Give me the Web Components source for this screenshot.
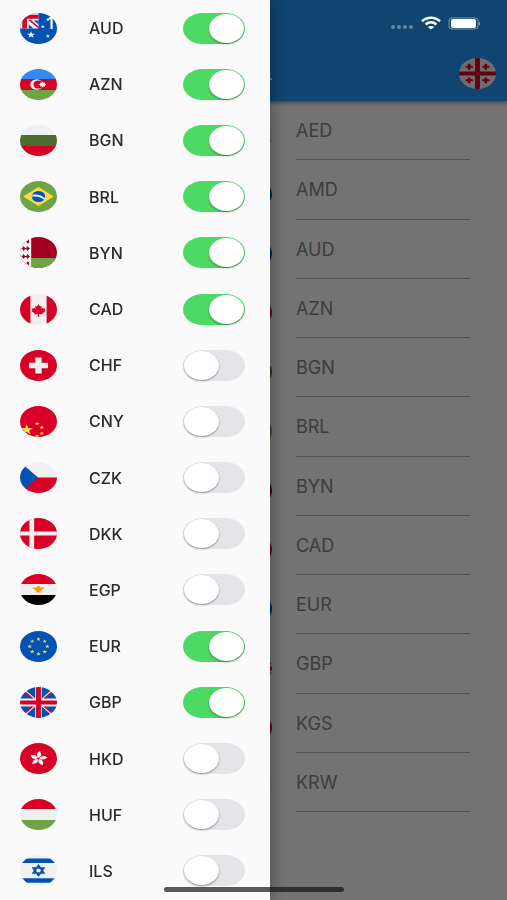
<!DOCTYPE html>
<html lang="en">
<head>
<meta charset="utf-8">
<meta name="viewport" content="width=device-width, initial-scale=1">
<title>Currencies</title>
<style>
  body {
    margin: 0;
    font-family: Inter, "Liberation Sans", sans-serif;
  }
</style>
</head>
<body>
<currency-app></currency-app>

<script>
// Points of a five-pointed star
function star(cx, cy, r, fill) {
  const points = [];
  for (let i = 0; i < 10; i++) {
    const radius = i % 2 ? r * 0.4 : r;
    const a = Math.PI * (i / 5 - 0.5);
    points.push(Math.round(cx + radius * Math.cos(a)) + ',' + Math.round(cy + radius * Math.sin(a)));
  }
  return `<polygon fill="${fill}" points="${points.join(' ')}"/>`;
}

function stripes(top, middle, bottom) {
  return `<path fill="${top}" d="M0 0h512v167H0z"/>
    <path fill="${middle}" d="M0 167h512v178H0z"/>
    <path fill="${bottom}" d="M0 345h512v167H0z"/>`;
}

function ring(count, r, draw) {
  let out = '';
  for (let i = 0; i < count; i++) {
    const a = (Math.PI * 2 * i) / count;
    out += draw(256 + r * Math.sin(a), 256 - r * Math.cos(a));
  }
  return out;
}

const RED = '#d80027';
const BLUE = '#0052b4';
const GREEN = '#6da544';
const WHITE = '#f0f0f0';
const YELLOW = '#ffda44';

const base = (fill) => `<path fill="${fill}" d="M0 0h512v512H0z"/>`;

// Every flag is drawn on a 512 x 512 board and clipped by its host
const FLAGS = {
  AED: stripes(GREEN, WHITE, '#000') + `<path fill="#a2001d" d="M0 0h167v512H0z"/>`,
  AMD: stripes(RED, BLUE, '#ff9811'),
  AUD: base(BLUE) + `
    <path fill="${WHITE}" d="M0 0h256v256H0z"/>
    <path fill="${BLUE}" d="M122 190v66h66zM190 122h66v66z"/>
    <path fill="${RED}" d="M0 30h256v66H0zM32 0h64v256H32z"/>
    <path fill="${RED}" d="M112 112h34l110 110v34z"/>`
    + star(153, 360, 60, WHITE) + star(386, 382, 34, WHITE) + star(316, 225, 32, WHITE)
    + star(386, 110, 28, WHITE),
  AZN: stripes('#338af3', RED, GREEN) + `
    <circle cx="230" cy="256" r="88" fill="${WHITE}"/>
    <circle cx="254" cy="256" r="68" fill="${RED}"/>
    <path fill="${WHITE}" d="M312 206l14 20 22-5-5 22 24 13-24 13 5 22-22-5-14 20-14-20-22 5 5-22-24-13 24-13-5-22 22 5z"/>`,
  BGN: stripes(WHITE, '#496e2d', RED),
  BRL: base(GREEN) + `
    <path fill="${YELLOW}" d="M256 100l211 156-211 156L45 256z"/>
    <circle cx="256" cy="256" r="92" fill="${BLUE}"/>
    <path fill="${WHITE}" d="M174 226c62-14 130 6 172 62l-9 25c-44-44-106-68-173-52z"/>`,
  BYN: base('#a2001d') + `
    <path fill="${GREEN}" d="M155 345h357v167H155z"/>
    <path fill="#fafafa" d="M0 0h155v512H0z"/>
    <g fill="#a2001d">
      <path d="M50 148l26 42-26 42-26-42zM106 148l26 42-26 42-26-42z"/>
      <path d="M50 280l26 42-26 42-26-42zM106 280l26 42-26 42-26-42z"/>
      <path d="M24 180h108v20H24zM24 312h108v20H24z"/>
      <path d="M126 40v60l-20 8-20-30zM126 472v-60l-20-8-20 30z"/>
    </g>`,
  CAD: base(WHITE) + `
    <path fill="${RED}" d="M0 0h144v512H0zM368 0h144v512H368z"/>
    <path fill="${RED}" d="M256 170l22 38 24-10-8 46 24-20 8 18 26-4-12 30 18 12-50 36 6 20-48-6v46h-20v-46l-48 6 6-20-50-36 18-12-12-30 26 4 8-18 24 20-8-46 24 10z"/>`,
  CHF: base(RED) + `<path fill="${WHITE}" d="M212 124h88v88h88v88h-88v88h-88v-88h-88v-88h88z"/>`,
  CNY: base(RED) + star(93, 394, 92, YELLOW) + star(237, 293, 36, YELLOW)
    + star(302, 354, 36, YELLOW) + star(302, 452, 36, YELLOW) + star(237, 500, 36, YELLOW),
  CZK: base(WHITE) + `
    <path fill="${RED}" d="M200 256h312v256H0z"/>
    <path fill="${BLUE}" d="M0 0l60 60 190 196L60 452 0 512z"/>`,
  DKK: base(RED) + `<path fill="${WHITE}" d="M130 0h66v223h316v66H196v223h-66V289H0v-66h130z"/>`,
  EGP: stripes(RED, WHITE, '#000') + `
    <path fill="#ff9811" d="M176 224h56c0-18 10-24 24-24s24 6 24 24h56c0 18-14 32-32 32h2c-4 16-14 28-30 28l18 22h-76l18-22c-16 0-26-12-30-28h2c-18 0-32-14-32-32z"/>`,
  EUR: base(BLUE) + ring(8, 122, (x, y) => star(x, y, 34, YELLOW)),
  GBP: base(WHITE) + `
    <path fill="${BLUE}" d="M60 90l110 100H0zM90 60h120v130zM302 60h120L302 190zM452 90v100H342zM452 90l60 100H342zM0 322h170L60 422zM90 452l120-130v190zM302 322v190l120-60zM342 322h170l-60 100zM140 0h70v180L96 62zM302 0h70l44 62-114 118z"/>
    <path fill="${RED}" d="M222 0h68v222h222v68H290v222h-68V290H0v-68h222z"/>
    <path fill="${RED}" d="M322 322h34l90 92-16 18zM190 322h-34l-90 92 16 18zM190 190h-34L66 98l16-18zM322 190h34l90-92-16-18z"/>`,
  GEL: base(WHITE) + `
    <path fill="${RED}" d="M222 0h68v222h222v68H290v222h-68V290H0v-68h222z"/>
    <path fill="${RED}" d="M124 94h34v32h34v34h-34v32h-34v-32H92v-34h32zM354 94h34v32h34v34h-34v32h-34v-32h-32v-34h32zM124 320h34v32h34v34h-34v32h-34v-32H92v-34h32zM354 320h34v32h34v34h-34v32h-34v-32h-32v-34h32z"/>`,
  HKD: base(RED) + [8, 80, 152, 224, 296].map((deg) => `
    <path fill="${WHITE}" transform="rotate(${deg} 256 256)" d="M254 246c-38-24-44-84 10-116-4 26 32 40 16 80-6 16-18 22-26 36z"/>`).join(''),
  HUF: stripes(RED, WHITE, GREEN),
  ILS: base(WHITE) + `
    <path fill="${BLUE}" d="M0 56h512v76H0zM0 384h512v76H0z"/>
    <path fill="none" stroke="${BLUE}" stroke-width="24" d="M256 172l74 126H182zM256 340l74-126H182z"/>`,
  KGS: base(RED) + `<circle cx="256" cy="256" r="110" fill="${YELLOW}"/>`,
  KRW: base(WHITE) + `
    <path fill="${RED}" d="M156 256a100 100 0 0 1 200 0z"/>
    <path fill="${BLUE}" d="M156 256a100 100 0 0 0 200 0z"/>`
};

class CurrencyFlag extends HTMLElement {
  constructor() {
    super();
    this.attachShadow({ mode: 'open' });
  }

  connectedCallback() {
    this.shadowRoot.innerHTML = `
      <style>
        :host {
          display: block;
          flex: none;
          width: 37px;
          height: 31px;
          border-radius: 50%;
          overflow: hidden;
        }

        svg {
          display: block;
          width: 100%;
          height: 100%;
        }
      </style>
      <svg viewBox="0 0 512 512" preserveAspectRatio="none" aria-hidden="true">${FLAGS[this.getAttribute('code')]}</svg>
    `;
  }
}
customElements.define('currency-flag', CurrencyFlag);

// One line of the drawer: flag, code and switch
class CurrencyToggle extends HTMLElement {
  constructor() {
    super();
    this.attachShadow({ mode: 'open' });
  }

  connectedCallback() {
    const code = this.getAttribute('code');
    this.shadowRoot.innerHTML = `
      <style>
        :host {
          display: flex;
          align-items: center;
          flex: 1 0 auto;
          gap: 32px;
          min-height: 48px;
          padding: 0 25px 0 20px;
        }

        label {
          flex: 1;
          font-size: 16px;
          line-height: 20px;
          font-weight: 500;
          color: #2b2b2b;
        }

        input {
          appearance: none;
          flex: none;
          display: flex;
          align-items: center;
          width: 62px;
          height: 31px;
          margin: 0;
          padding: 0 1px;
          box-sizing: border-box;
          border-radius: 20px / 16px;
          background: #e5e5e9;
          cursor: pointer;
        }

        input::before {
          content: "";
          width: 35px;
          height: 29px;
          border-radius: 50%;
          background: #fff;
          box-shadow: 0 1px 2px rgba(0, 0, 0, 0.4);
        }

        input:checked {
          justify-content: flex-end;
          background: #4cd964;
        }
      </style>
      <currency-flag code="${code}"></currency-flag>
      <label for="switch">${code}</label>
      <input type="checkbox" role="switch" id="switch">
    `;
    this.shadowRoot.querySelector('input').checked = this.hasAttribute('on');
  }
}
customElements.define('currency-toggle', CurrencyToggle);

// One line of the converter: flag and amount field
class AmountField extends HTMLElement {
  constructor() {
    super();
    this.attachShadow({ mode: 'open' });
  }

  connectedCallback() {
    const code = this.getAttribute('code');
    this.shadowRoot.innerHTML = `
      <style>
        :host {
          display: grid;
          grid-template-columns: 1fr 37px 174px;
          column-gap: 24px;
          padding-right: 37px;
          min-height: 48px;
        }

        currency-flag {
          grid-column: 2;
          align-self: end;
          margin-bottom: 10px;
        }

        .field {
          display: grid;
          border-bottom: 1px solid #b4b4b4;
        }

        label,
        input {
          grid-area: 1 / 1;
          font: inherit;
          font-size: 18px;
          line-height: 24px;
        }

        label {
          align-self: center;
          padding-top: 2px;
          color: #868686;
        }

        input {
          width: 100%;
          box-sizing: border-box;
          border: 0;
          padding: 0;
          background: none;
          outline: none;
        }
      </style>
      <currency-flag code="${code}"></currency-flag>
      <div class="field">
        <label for="amount">${code}</label>
        <input id="amount" type="text" inputmode="decimal">
      </div>
    `;
  }
}
customElements.define('amount-field', AmountField);

class AppHeader extends HTMLElement {
  constructor() {
    super();
    this.attachShadow({ mode: 'open' });
    this.shadowRoot.innerHTML = `
      <style>
        :host {
          display: grid;
          grid-template-columns: 1fr 37px 187px 37px;
          align-items: end;
          box-sizing: border-box;
          height: 101px;
          padding: 0 11px 12px 0;
          background: #2196f3;
          box-shadow: 0 2px 4px rgba(0, 0, 0, 0.4);
          z-index: 1;
        }

        svg {
          grid-column: 2;
          width: 100%;
          height: 20px;
        }

        currency-flag {
          grid-column: 4;
        }
      </style>
      <svg viewBox="0 0 37 20" aria-hidden="true"><path d="M23 10h14" stroke="#fff" stroke-width="2"/></svg>
      <currency-flag code="GEL"></currency-flag>
    `;
  }
}
customElements.define('app-header', AppHeader);

class SideDrawer extends HTMLElement {
  constructor() {
    super();
    this.attachShadow({ mode: 'open' });
    this.shadowRoot.innerHTML = `
      <style>
        :host {
          position: fixed;
          inset: 0;
          z-index: 2;
          display: flex;
          background: rgba(0, 0, 0, 0.54);
        }

        nav {
          display: flex;
          flex-direction: column;
          box-sizing: border-box;
          width: 270px;
          max-width: 80%;
          padding-bottom: 1px;
          overflow: hidden;
          background: #fafafa;
          box-shadow: 0 0 16px rgba(0, 0, 0, 0.4);
        }
      </style>
      <nav aria-label="Currencies"><slot></slot></nav>
    `;
  }
}
customElements.define('side-drawer', SideDrawer);

class StatusBar extends HTMLElement {
  constructor() {
    super();
    this.attachShadow({ mode: 'open' });
    this.shadowRoot.innerHTML = `
      <style>
        :host {
          position: fixed;
          inset: 0 0 auto 0;
          z-index: 3;
          display: flex;
          align-items: center;
          justify-content: space-between;
          height: 46px;
          padding: 0 26px 0 47px;
          color: #fff;
          pointer-events: none;
        }

        .clock {
          font-size: 16px;
          line-height: 20px;
          font-weight: 600;
        }

        .icons {
          display: flex;
          align-items: center;
          gap: 7px;
        }

        svg {
          display: block;
        }
      </style>
      <span class="clock">1</span>
      <div class="icons">
        <svg width="24" height="14" viewBox="0 0 24 14" fill="#fff" fill-opacity="0.35">
          <circle cx="3" cy="11" r="2"/><circle cx="9" cy="11" r="2"/><circle cx="15" cy="11" r="2"/><circle cx="21" cy="11" r="2"/>
        </svg>
        <svg width="20" height="14" viewBox="0 0 20 14" fill="none" stroke="#fff" stroke-width="2.6">
          <path d="M1 5.2C6 .6 14 .6 19 5.2"/>
          <path d="M4.6 8.4c3.2-2.8 7.6-2.8 10.8 0"/>
          <path d="M10 13.500L6.800 11c1.800-1.500 4.600-1.500 6.400 0z" fill="#fff" stroke="none"/>
        </svg>
        <svg width="33" height="13" viewBox="0 0 33 13">
          <rect x="1" y="1" width="29" height="11" rx="3" fill="none" stroke="#fff" stroke-opacity="0.45"/>
          <rect x="3" y="2" width="25" height="9" rx="2" fill="#fff"/>
          <path d="M31 4.500c1.600.4 1.600 3.600 0 4z" fill="#fff" fill-opacity="0.5"/>
        </svg>
      </div>
    `;
  }
}
customElements.define('status-bar', StatusBar);

class HomeIndicator extends HTMLElement {
  constructor() {
    super();
    this.attachShadow({ mode: 'open' });
    this.shadowRoot.innerHTML = `
      <style>
        :host {
          position: fixed;
          inset: auto 0 8px 0;
          z-index: 3;
          display: flex;
          justify-content: center;
          pointer-events: none;
        }

        span {
          width: 180px;
          height: 5px;
          border-radius: 3px;
          background: rgba(20, 20, 20, 0.7);
        }
      </style>
      <span></span>
    `;
  }
}
customElements.define('home-indicator', HomeIndicator);

class CurrencyApp extends HTMLElement {
  constructor() {
    super();
    this.attachShadow({ mode: 'open' });

    const active = ['AED', 'AMD', 'AUD', 'AZN', 'BGN', 'BRL', 'BYN', 'CAD', 'EUR', 'GBP', 'KGS', 'KRW'];
    const listed = ['AUD', 'AZN', 'BGN', 'BRL', 'BYN', 'CAD', 'CHF', 'CNY', 'CZK', 'DKK', 'EGP', 'EUR', 'GBP', 'HKD', 'HUF', 'ILS'];

    this.shadowRoot.innerHTML = `
      <style>
        :host {
          display: flex;
          flex-direction: column;
          min-height: 100vh;
          background: #fafafa;
        }

        main {
          flex: 1;
          display: grid;
          grid-auto-rows: 1fr;
          padding-bottom: 88px;
        }
      </style>
      <app-header></app-header>
      <main>${active.map((code) => `<amount-field code="${code}"></amount-field>`).join('')}</main>
      <side-drawer>
        ${listed.map((code) => `<currency-toggle code="${code}"${active.includes(code) ? ' on' : ''}></currency-toggle>`).join('')}
      </side-drawer>
      <status-bar></status-bar>
      <home-indicator></home-indicator>
    `;
  }
}
customElements.define('currency-app', CurrencyApp);
</script>
</body>
</html>
